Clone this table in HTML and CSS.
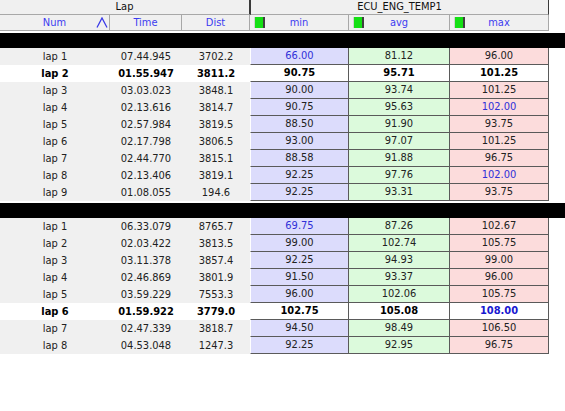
FILE: index.html
```html
<!DOCTYPE html>
<html>
<head>
<meta charset="utf-8">
<link rel="stylesheet" href="styles.css">
</head>
<body>
<div class="table">
  <div class="hrow1">
    <div class="h1 lapgrp">Lap</div>
    <div class="h1 ecugrp">ECU_ENG_TEMP1</div>
  </div>
  <div class="hrow2">
    <div class="h2 num">Num
      <svg class="sort" width="12" height="11" viewBox="0 0 12 11"><polyline points="1,10.5 6,1 11,10.5" fill="none" stroke="#3a3ae8" stroke-width="1.3"/></svg>
    </div>
    <div class="h2">Time</div>
    <div class="h2">Dist</div>
    <div class="h2 stat"><span class="mark"></span>min</div>
    <div class="h2 stat"><span class="mark"></span>avg</div>
    <div class="h2 stat"><span class="mark"></span>max</div>
  </div>
  <div class="sep"></div>
  <div class="row"><div class="c">lap 1</div><div class="c">07.44.945</div><div class="c">3702.2</div><div class="v mn blue">66.00</div><div class="v av">81.12</div><div class="v mx">96.00</div></div>
  <div class="row best"><div class="c">lap 2</div><div class="c">01.55.947</div><div class="c">3811.2</div><div class="v mn">90.75</div><div class="v av">95.71</div><div class="v mx">101.25</div></div>
  <div class="row"><div class="c">lap 3</div><div class="c">03.03.023</div><div class="c">3848.1</div><div class="v mn">90.00</div><div class="v av">93.74</div><div class="v mx">101.25</div></div>
  <div class="row"><div class="c">lap 4</div><div class="c">02.13.616</div><div class="c">3814.7</div><div class="v mn">90.75</div><div class="v av">95.63</div><div class="v mx blue">102.00</div></div>
  <div class="row"><div class="c">lap 5</div><div class="c">02.57.984</div><div class="c">3819.5</div><div class="v mn">88.50</div><div class="v av">91.90</div><div class="v mx">93.75</div></div>
  <div class="row"><div class="c">lap 6</div><div class="c">02.17.798</div><div class="c">3806.5</div><div class="v mn">93.00</div><div class="v av">97.07</div><div class="v mx">101.25</div></div>
  <div class="row"><div class="c">lap 7</div><div class="c">02.44.770</div><div class="c">3815.1</div><div class="v mn">88.58</div><div class="v av">91.88</div><div class="v mx">96.75</div></div>
  <div class="row"><div class="c">lap 8</div><div class="c">02.13.406</div><div class="c">3819.1</div><div class="v mn">92.25</div><div class="v av">97.76</div><div class="v mx blue">102.00</div></div>
  <div class="row"><div class="c">lap 9</div><div class="c">01.08.055</div><div class="c">194.6</div><div class="v mn">92.25</div><div class="v av">93.31</div><div class="v mx">93.75</div></div>
  <div class="sep"></div>
  <div class="row"><div class="c">lap 1</div><div class="c">06.33.079</div><div class="c">8765.7</div><div class="v mn blue">69.75</div><div class="v av">87.26</div><div class="v mx">102.67</div></div>
  <div class="row"><div class="c">lap 2</div><div class="c">02.03.422</div><div class="c">3813.5</div><div class="v mn">99.00</div><div class="v av">102.74</div><div class="v mx">105.75</div></div>
  <div class="row"><div class="c">lap 3</div><div class="c">03.11.378</div><div class="c">3857.4</div><div class="v mn">92.25</div><div class="v av">94.93</div><div class="v mx">99.00</div></div>
  <div class="row"><div class="c">lap 4</div><div class="c">02.46.869</div><div class="c">3801.9</div><div class="v mn">91.50</div><div class="v av">93.37</div><div class="v mx">96.00</div></div>
  <div class="row"><div class="c">lap 5</div><div class="c">03.59.229</div><div class="c">7553.3</div><div class="v mn">96.00</div><div class="v av">102.06</div><div class="v mx">105.75</div></div>
  <div class="row best"><div class="c">lap 6</div><div class="c">01.59.922</div><div class="c">3779.0</div><div class="v mn">102.75</div><div class="v av">105.08</div><div class="v mx blue">108.00</div></div>
  <div class="row"><div class="c">lap 7</div><div class="c">02.47.339</div><div class="c">3818.7</div><div class="v mn">94.50</div><div class="v av">98.49</div><div class="v mx">106.50</div></div>
  <div class="row"><div class="c">lap 8</div><div class="c">04.53.048</div><div class="c">1247.3</div><div class="v mn">92.25</div><div class="v av">92.95</div><div class="v mx">96.75</div></div>
</div>
</body>
</html>
```
FILE: styles.css
```css
* { box-sizing: border-box; }
html, body { margin: 0; padding: 0; background: #fff; }
body {
  font-family: "DejaVu Sans Condensed", "Noto Sans", "DejaVu Sans", sans-serif;
  font-size: 11px;
  color: #222;
  width: 565px;
  height: 411px;
  overflow: hidden;
}
.table { display: flex; flex-direction: column; }

.hrow1 {
  display: grid;
  grid-template-columns: 251px 298px;
  height: 15px;
  width: 549px;
}
.h1 {
  background: #f0f0f0;
  border-bottom: 1px solid #a8a8a8;
  text-align: center;
  line-height: 14px;
  color: #111;
}
.lapgrp { border-right: 2px solid #3a3a3a; }
.ecugrp { border-right: 1px solid #3a3a3a; }

.hrow2 {
  display: grid;
  grid-template-columns: 110px 72px 68px 99px 101px 99px;
  height: 16px;
  width: 549px;
}
.h2 {
  position: relative;
  background: #f0f0f0;
  border-bottom: 1px solid #a8a8a8;
  border-right: 1px solid #a8a8a8;
  text-align: center;
  line-height: 15px;
  color: #3c3cf0;
}
.sort { position: absolute; left: 96px; top: 2px; }
.mark {
  position: absolute;
  left: 4px;
  top: 2px;
  width: 11px;
  height: 11px;
  background: #14e014;
  border-right: 2px solid #404040;
  border-left: 1px solid #d0d0d0;
}

.sep {
  height: 15px;
  margin-top: 2px;
  background: #000;
}

.row {
  display: grid;
  grid-template-columns: 110px 72px 68px 99px 101px 99px;
  height: 17px;
  width: 549px;
}
.c {
  background: #f0f0f0;
  text-align: center;
  line-height: 17px;
}
.v {
  text-align: center;
  line-height: 16px;
  border-bottom: 1px solid #5a5a5a;
  border-right: 1px solid #5a5a5a;
}
.mn { background: #dcdcfc; border-left: 1px solid #fff; }
.av { background: #dcfadc; }
.mx { background: #fcdcdc; }
.blue { color: #3030d8; }

.best .c, .best .v { background: #fff; font-weight: bold; color: #000; }
.best .v.blue { color: #1818d0; }
```
